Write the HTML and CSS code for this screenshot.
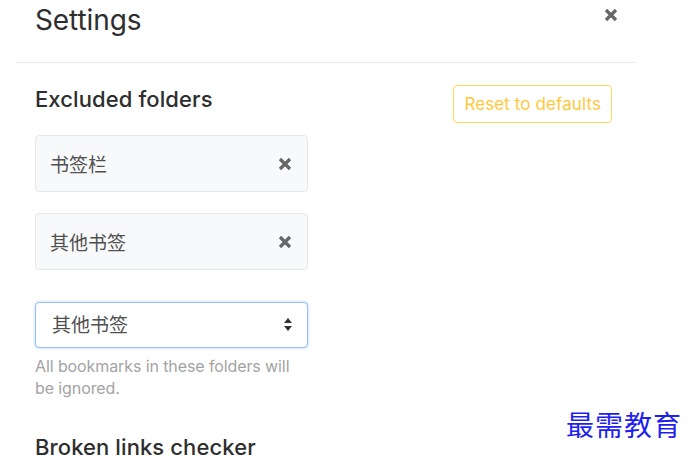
FILE: index.html
```html
<!DOCTYPE html>
<html lang="zh-CN">
<head>
  <meta charset="UTF-8" />
  <meta name="viewport" content="width=device-width, initial-scale=1.0" />
  <title>Settings</title>
  <link rel="stylesheet" href="styles.css">
</head>
<body>
  <div class="modal">
    <header class="modal-header">
      <h1>Settings</h1>
      <button class="close" aria-label="Close">
        <svg width="14" height="14" viewBox="0 0 14 14"><path d="M2 2L12 12M12 2L2 12" /></svg>
      </button>
    </header>
    <section class="modal-body">
      <div class="section-head">
        <h2>Excluded folders</h2>
        <button class="btn-reset">Reset to defaults</button>
      </div>
      <ul class="folder-list">
        <li class="folder">
          <span>书签栏</span>
          <button class="remove" aria-label="Remove">
            <svg width="14" height="14" viewBox="0 0 14 14"><path d="M2 2L12 12M12 2L2 12" /></svg>
          </button>
        </li>
        <li class="folder">
          <span>其他书签</span>
          <button class="remove" aria-label="Remove">
            <svg width="14" height="14" viewBox="0 0 14 14"><path d="M2 2L12 12M12 2L2 12" /></svg>
          </button>
        </li>
      </ul>
      <div class="select-wrap">
        <select>
          <option>其他书签</option>
          <option>书签栏</option>
        </select>
        <svg class="arrows" width="8" height="13" viewBox="0 0 8 13">
          <path d="M4 0L8 5H0Z" />
          <path d="M4 13L8 8H0Z" />
        </svg>
      </div>
      <p class="help">All bookmarks in these folders will be ignored.</p>
      <h2 class="next-title">Broken links checker</h2>
    </section>
  </div>
  <div class="watermark">最需教育</div>
</body>
</html>
```

FILE: styles.css
```css
:root {
  --text: #2e2e2e;
  --muted: #a3a3a3;
  --icon: #666666;
  --line: #e9ebee;
  --card-bg: #f8f9fa;
  --card-border: #e6e8eb;
  --yellow: #ffd65c;
  --yellow-text: #ffc83a;
  --focus: #94c0f8;
}
* { box-sizing: border-box; margin: 0; padding: 0; }
body {
  font-family: 'Inter', 'Noto Sans CJK SC', sans-serif;
  background: #fff;
  color: var(--text);
  position: relative;
  overflow: hidden;
  height: 456px;
}
.modal {
  width: 636px;
}
.modal-header {
  display: flex;
  justify-content: space-between;
  align-items: flex-start;
  margin-left: 16px;
  padding: 3px 18px 25px 19px;
  border-bottom: 1px solid var(--line);
}
.modal-header h1 {
  font-size: 28px;
  line-height: 34px;
  font-weight: 400;
  letter-spacing: -0.1px;
}
button {
  background: none;
  border: none;
  font-family: inherit;
  cursor: pointer;
}
.close, .remove {
  display: flex;
}
.close { margin-top: 5px; }
.close path, .remove path {
  stroke: var(--icon);
  stroke-width: 3.2;
  fill: none;
}
.modal-body {
  margin-left: 16px;
  padding: 0 24px 0 19px;
}
.section-head {
  display: flex;
  justify-content: space-between;
  align-items: flex-start;
  padding-top: 22px;
}
h2 {
  font-size: 22px;
  line-height: 26px;
  font-weight: 500;
  letter-spacing: 0.1px;
  color: var(--text);
}
.section-head h2 { margin-top: 1px; }
.btn-reset {
  height: 38px;
  padding: 0 10px;
  border: 1.5px solid var(--yellow);
  border-radius: 4px;
  color: var(--yellow-text);
  font-size: 17px;
  letter-spacing: 0.1px;
}
.folder-list {
  list-style: none;
  margin-top: 12px;
  width: 273px;
}
.folder {
  display: flex;
  justify-content: space-between;
  align-items: center;
  height: 57px;
  padding: 0 15px 0 14px;
  margin-bottom: 21px;
  background: var(--card-bg);
  border: 1px solid var(--card-border);
  border-radius: 4px;
  font-size: 19px;
  color: #505050;
}
.select-wrap {
  position: relative;
  width: 273px;
  margin-top: 32px;
}
.select-wrap select {
  appearance: none;
  -webkit-appearance: none;
  width: 100%;
  height: 46px;
  padding: 0 30px 0 16px;
  border: 1px solid var(--focus);
  border-radius: 4px;
  box-shadow: 0 0 3px rgba(90, 150, 240, 0.45);
  background: #fff;
  font-family: inherit;
  font-size: 19px;
  color: #505050;
  outline: none;
}
.arrows {
  position: absolute;
  right: 16px;
  top: 16px;
  fill: #333;
}
.help {
  width: 273px;
  margin-top: 7px;
  font-size: 16px;
  line-height: 22px;
  letter-spacing: -0.1px;
  color: var(--muted);
}
.next-title { margin-top: 35px; }
.watermark {
  position: absolute;
  left: 566px;
  top: 408px;
  font-family: 'Noto Sans CJK SC', serif;
  font-size: 28px;
  line-height: 32px;
  letter-spacing: 1px;
  color: #1f1fef;
}
```
